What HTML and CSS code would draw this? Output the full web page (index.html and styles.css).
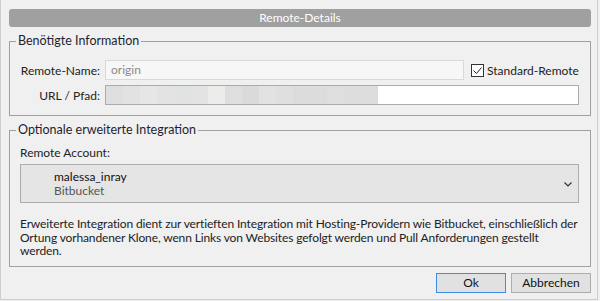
FILE: index.html
```html
<!DOCTYPE html>
<html lang="de">
<head>
  <meta charset="UTF-8">
  <title>Remote-Details</title>
  <link rel="stylesheet" href="styles.css">
</head>
<body>
<div class="window">
  <div class="titlebar">Remote-Details</div>

  <fieldset class="group">
    <legend>Benötigte Information</legend>
    <div class="info-grid">
      <label class="lbl">Remote-Name:</label>
      <div class="field disabled">origin</div>
      <label class="check"><span class="box"><svg width="11" height="11" viewBox="0 0 11 11"><polyline points="1.5,5.5 4.5,8.5 9.5,2.5" fill="none" stroke="#222" stroke-width="1"/></svg></span>Standard-Remote</label>

      <label class="lbl">URL / Pfad:</label>
      <div class="field url">
        <div class="blur">
          <span style="background:#dfdede"></span><span style="background:#e2e2e2"></span><span style="background:#e6e6e6"></span><span style="background:#e3e3e3"></span><span style="background:#e1e3e3"></span><span style="background:#e3e3e3"></span><span style="background:#ececea"></span><span style="background:#dedee0"></span><span style="background:#dadada"></span><span style="background:#e2e2e2"></span><span style="background:#e0dfdf"></span><span style="background:#dcdcdc"></span><span style="background:#dcdcdc"></span><span style="background:#dddee0"></span><span style="background:#dddddd"></span><span style="background:#dddddd"></span>
        </div>
      </div>
    </div>
  </fieldset>

  <fieldset class="group second">
    <legend>Optionale erweiterte Integration</legend>
    <div class="group-body">
      <div class="account-label">Remote Account:</div>
      <div class="select">
        <div class="account">
          <div class="acc-name">malessa_inray</div>
          <div class="acc-host">Bitbucket</div>
        </div>
        <svg class="chevron" width="8" height="5" viewBox="0 0 8 5"><polyline points="0.5,0.5 4,4 7.5,0.5" fill="none" stroke="#333" stroke-width="1.2"/></svg>
      </div>
      <p class="desc"><span class="line">Erweiterte Integration dient zur vertieften Integration mit Hosting-Providern wie Bitbucket, einschließlich der</span><span class="line">Ortung vorhandener Klone, wenn Links von Websites gefolgt werden und Pull Anforderungen gestellt</span><span class="line">werden.</span></p>
    </div>
  </fieldset>

  <div class="buttons">
    <button class="btn default">Ok</button>
    <button class="btn">Abbrechen</button>
  </div>
</div>
</body>
</html>
```

FILE: styles.css
```css
* { box-sizing: border-box; }
body { margin: 0; background: #f0f0f0; font-family: Lato, "Noto Sans", sans-serif; font-size: 12px; color: #1b1b1b; }
.window { width: 598px; height: 300px; border: 1px solid #cdcdcd; border-top: none; padding: 9px 6px 0 8px; background: #f0f0f0; overflow: hidden; }
.titlebar { height: 18px; line-height: 18px; background: #a0a0a0; border-radius: 3px; color: #fff; text-align: center; font-size: 12px; }

.group { margin: 6px 0 0; padding: 0 11px 10px 6px; border: 1px solid #a0a0a0; min-width: 0; }
.group legend { padding: 0 2px; font-size: 12.5px; line-height: 16px; color: #1e1e2e; }

.info-grid { display: grid; grid-template-columns: 84px 359px minmax(0, 1fr); grid-auto-rows: 20px; column-gap: 5px; row-gap: 5px; align-items: center; padding-top: 11px; }
.lbl { text-align: right; color: #222; white-space: nowrap; }
.field { height: 20px; border: 1px solid #acacac; background: #fff; padding: 0 5px; line-height: 18px; }
.field.disabled { border-color: #d9d9d9; background: #f7f7f7; color: #8a8a8a; }
.field.url { grid-column: 2 / 4; padding: 0; }
.blur { display: flex; width: 272px; height: 18px; }
.blur span { flex: 1; }

.check { display: flex; align-items: center; gap: 3px; padding-left: 2px; color: #222; white-space: nowrap; }
.box { width: 13px; height: 13px; border: 1px solid #333; background: #fff; display: flex; align-items: center; justify-content: center; }

.second { padding-bottom: 8px; }
.group-body { padding-left: 4px; }
.account-label { margin-top: 8px; line-height: 14px; color: #222; }
.select { margin-top: 4px; height: 39px; border: 1px solid #acacac; background: #e5e5e5; display: flex; align-items: center; justify-content: space-between; padding: 0 6px 0 33px; }
.acc-name { line-height: 14px; color: #111; }
.acc-host { line-height: 14px; color: #555; }
.chevron { margin-top: 2px; }
.desc { margin: 14px 0 0; line-height: 13.5px; color: #222; letter-spacing: -0.13px; }
.line { display: block; white-space: nowrap; }

.buttons { display: flex; justify-content: flex-end; gap: 5px; margin-top: 6px; }
.btn { height: 20px; padding: 0; font: inherit; color: #111; background: #e1e1e1; border: 1px solid #adadad; }
.btn.default { width: 70px; border-color: #3c8ce6; }
.btn:last-child { width: 80px; }
```
